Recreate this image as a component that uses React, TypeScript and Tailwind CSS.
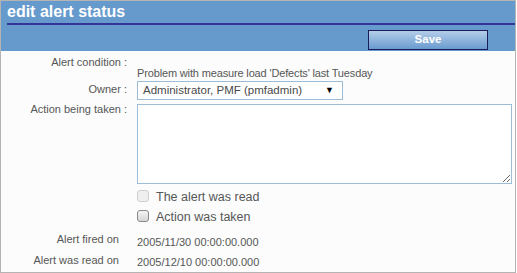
import React from "react";

const Box = ({ disabled }: { disabled?: boolean }) => (
    <span
        className={
            "block size-[12px] shrink-0 rounded-[3px] border " +
            (disabled
                ? "border-[#cfcfcf] bg-[#efefef]"
                : "border-[#8a8a8a] bg-gradient-to-b from-[#f4f4f4] to-[#d6d6d6]")
        }
    />
);

const App = () => {
    return (
        <div className="h-[273px] w-[516px] border border-[#b4b4b4] bg-[#fbfcfb] font-['Liberation_Sans',Arial,sans-serif] text-[11px] text-[#575757]">
            <div className="h-[50px] bg-[#6699cc] pl-[6px]">
                <div className="h-[22px] pt-[1px] text-[16px] font-bold leading-[19px] text-white">edit alert status</div>
                <div className="h-[2px] bg-[#333399]" />
                <div className="mt-[5px] flex justify-end pr-[27px]">
                    <button className="h-[20px] w-[120px] border border-[#1c1c5c] bg-gradient-to-b from-[#b3cde9] to-[#6a9bcf] text-[11.5px] font-bold text-white">
                        Save
                    </button>
                </div>
            </div>

            <div className="flex flex-col leading-[13px]">
                <div className="flex pt-[5px]">
                    <div className="w-[126px] text-right">Alert condition :</div>
                    <div className="ml-[10px] pt-[11px] tracking-[-0.15px]">Problem with measure load 'Defects' last Tuesday</div>
                </div>

                <div className="mt-[1px] flex">
                    <div className="w-[126px] pt-[2px] text-right">Owner :</div>
                    <div className="ml-[10px] flex h-[19px] w-[206px] items-center justify-between border border-[#9dbcd8] bg-white pl-[5px] pr-[8px] text-[11.5px] text-[#4a4a4a]">
                        <span>Administrator, PMF (pmfadmin)</span>
                        <span className="text-[9px] text-black">▼</span>
                    </div>
                </div>

                <div className="mt-[4px] flex">
                    <div className="-mt-[1px] w-[126px] text-right">Action being taken :</div>
                    <textarea className="ml-[10px] h-[80px] w-[375px] border border-[#9dbcd8] bg-white outline-none" />
                </div>

                <div className="mt-[6px] flex items-start pl-[136px]">
                    <Box disabled />
                    <span className="ml-[7px] pt-[1px] text-[12.5px]">The alert was read</span>
                </div>

                <div className="mt-[6px] flex items-start pl-[136px]">
                    <Box />
                    <span className="ml-[7px] pt-[1px] text-[12.5px]">Action was taken</span>
                </div>

                <div className="mt-[9px] flex">
                    <div className="w-[126px] pr-[8px] text-right">Alert fired on</div>
                    <div className="ml-[10px] pt-[3px]">2005/11/30 00:00:00.000</div>
                </div>

                <div className="mt-[5px] flex">
                    <div className="w-[126px] pr-[8px] text-right">Alert was read on</div>
                    <div className="ml-[10px] pt-[2px]">2005/12/10 00:00:00.000</div>
                </div>
            </div>
        </div>
    );
};

export default App;
